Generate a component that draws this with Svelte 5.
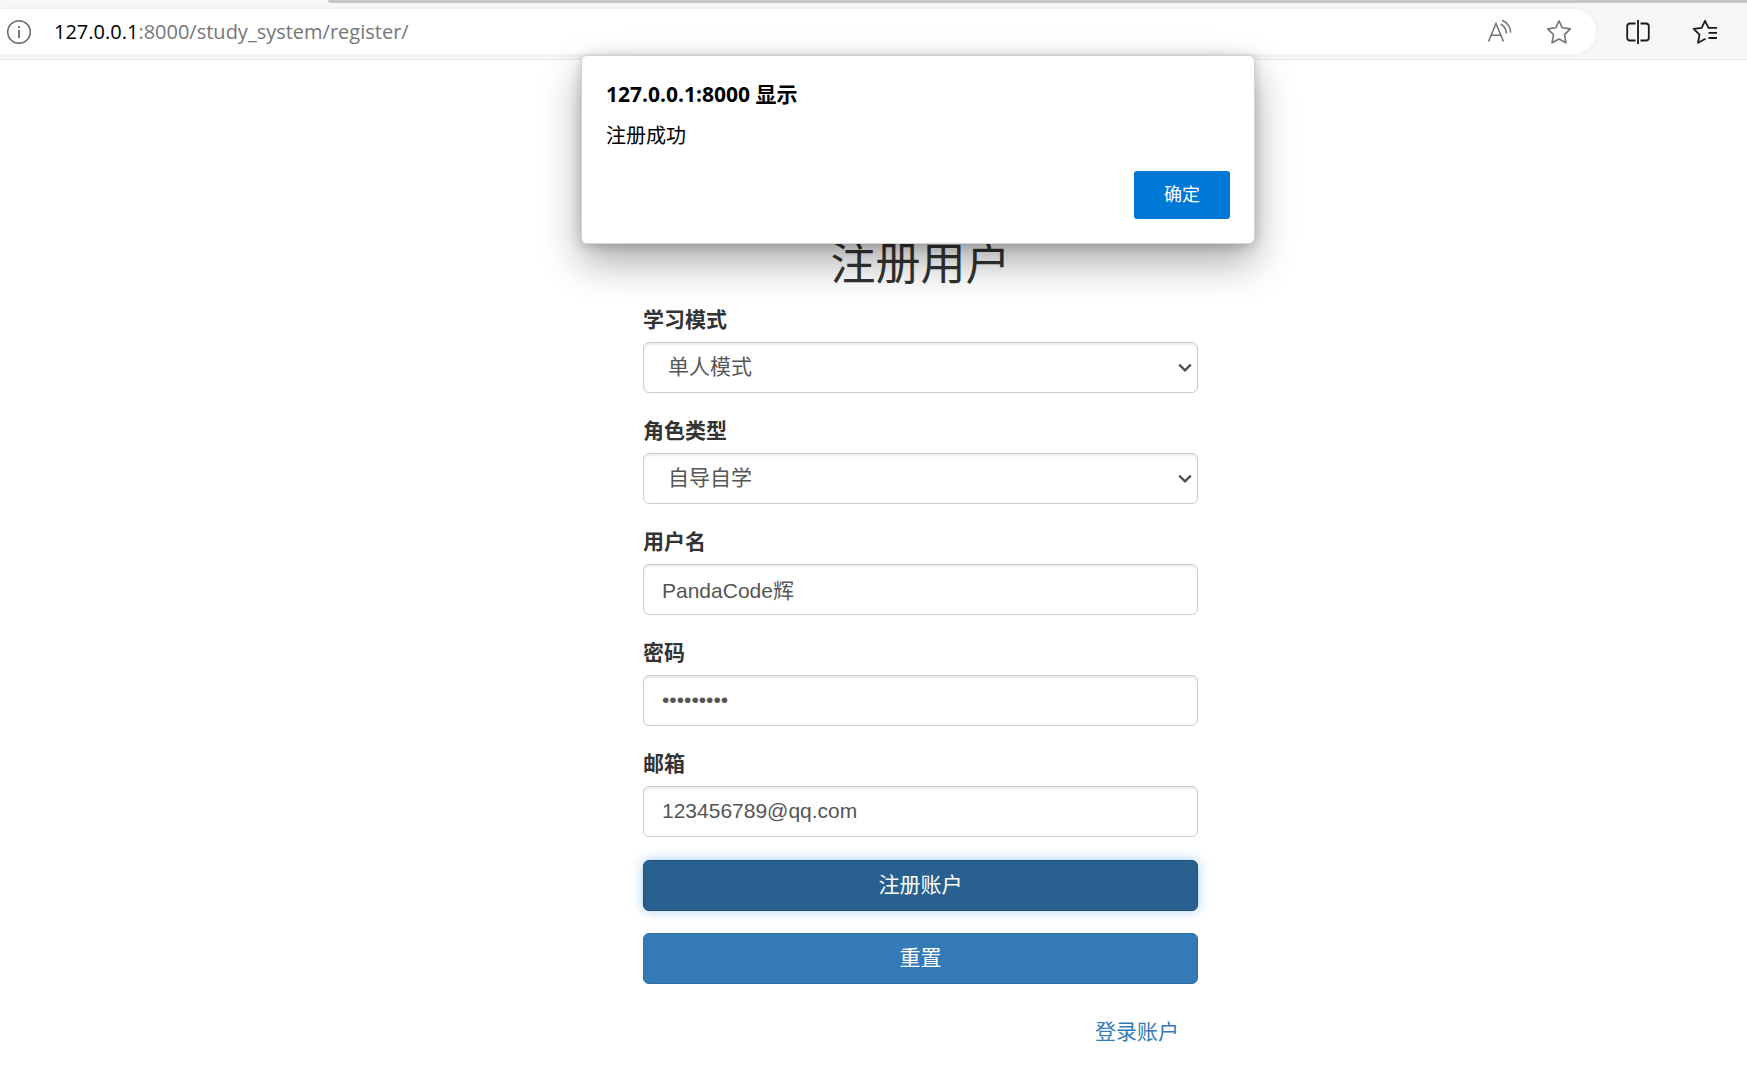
<script>
  let mode = $state('单人模式');
  let role = $state('自导自学');
  let username = $state('PandaCode辉');
  let password = $state('abc123456');
  let email = $state('123456789@qq.com');
</script>

{#snippet chevron()}
  <svg class="chevron" width="14" height="10" viewBox="0 0 14 10" aria-hidden="true">
    <path d="M1.2 1.6 7 7.4l5.800-5.800" fill="none" stroke="#4f4f4f" stroke-width="2.2" />
  </svg>
{/snippet}

<div class="window">
  <header>
    <div class="tabstrip"><span></span></div>
    <div class="toolbar">
      <div class="address">
        <svg class="info" width="26" height="26" viewBox="0 0 26 26" fill="none" stroke="#6b6b6b" aria-hidden="true">
          <circle cx="13" cy="13" r="11.300" stroke-width="1.500" />
          <path d="M13 11v8M13 7v2.200" stroke-width="1.800" />
        </svg>
        <p class="url"><span>127.0.0.1</span>:8000/study_system/register/</p>
        <button class="icon" type="button" aria-label="朗读此页内容">
          <svg width="26" height="26" viewBox="0 0 26 26" fill="none" stroke="#767676" stroke-width="1.600" aria-hidden="true">
            <path d="M2.500 22.500 10 4.500 17.500 22.500M5.300 16.300h9.500" />
            <path d="M14.800 5a11.500 11.500 0 0 1 5.700 9.500M16 1.300a14.500 14.500 0 0 1 8.700 12.200" />
          </svg>
        </button>
        <button class="icon" type="button" aria-label="收藏">
          <svg width="26" height="26" viewBox="0 0 26 26" fill="none" stroke="#767676" stroke-width="1.600" stroke-linejoin="round" aria-hidden="true">
            <path d="M13 1.800 16.300 8.800 24.300 9.900 18.500 15.600 20 23.800 13 20 6 23.800 7.500 15.600 1.700 9.900 9.700 8.800Z" />
          </svg>
        </button>
      </div>
      <button class="icon" type="button" aria-label="拆分屏幕">
        <svg width="26" height="26" viewBox="0 0 26 26" fill="none" stroke="#1b1b1b" stroke-width="1.800" aria-hidden="true">
          <path d="M10.500 4.500H5Q2.200 4.500 2.200 7.300V18.700Q2.200 21.500 5 21.500H10.500M15.500 4.500H21Q23.800 4.500 23.800 7.300V18.700Q23.800 21.500 21 21.500H15.500M13 1V25" />
        </svg>
      </button>
      <button class="icon" type="button" aria-label="收藏夹">
        <svg width="26" height="26" viewBox="0 0 26 26" fill="none" stroke="#1b1b1b" stroke-width="1.800" stroke-linejoin="round" aria-hidden="true">
          <path d="M25 8.800H16.500L13 1.800 9.700 8.800 1.700 9.900 7.500 15.600 6 23.800 13.500 19.800M16.500 13.800H25M16.500 19H25" />
        </svg>
      </button>
    </div>
  </header>

  <main>
    <form onsubmit={(e) => e.preventDefault()}>
      <h1>注册用户</h1>
      <div class="field">
        <label for="mode">学习模式</label>
        <div class="select">
          <select id="mode" bind:value={mode}>
            <option>单人模式</option>
            <option>多人模式</option>
          </select>
          {@render chevron()}
        </div>
      </div>
      <div class="field">
        <label for="role">角色类型</label>
        <div class="select">
          <select id="role" bind:value={role}>
            <option>自导自学</option>
          </select>
          {@render chevron()}
        </div>
      </div>
      <div class="field">
        <label for="username">用户名</label>
        <input id="username" type="text" bind:value={username} />
      </div>
      <div class="field">
        <label for="password">密码</label>
        <input id="password" type="password" bind:value={password} />
      </div>
      <div class="field">
        <label for="email">邮箱</label>
        <input id="email" type="email" bind:value={email} />
      </div>
      <button class="submit active" type="submit">注册账户</button>
      <button class="submit" type="reset">重置</button>
      <a href="#login">登录账户</a>
    </form>
  </main>

  <div class="dialog" role="alertdialog" aria-labelledby="dialog-title" aria-describedby="dialog-text">
    <h2 id="dialog-title">127.0.0.1:8000 显示</h2>
    <p id="dialog-text">注册成功</p>
    <button type="button">确定</button>
  </div>
</div>

<style>
  :global(body) {
    margin: 0;
    background: #fff;
  }

  * {
    box-sizing: border-box;
  }

  .window {
    position: relative;
    min-height: 100vh;
    overflow: hidden;
    color: #333;
    font-family: 'Liberation Sans', 'Noto Sans CJK SC', sans-serif;
    font-size: 21px;
    line-height: 30px;
  }

  header {
    background: #f7f7f7;
    border-bottom: 1px solid #e5e5e5;
  }

  .tabstrip {
    display: flex;
    padding-left: 328px;
  }

  .tabstrip span {
    flex: 1;
    height: 3px;
    background: #c6c6c6;
    border-bottom-left-radius: 3px;
  }

  .toolbar {
    display: flex;
    align-items: center;
    padding: 6px 29px 5px 0;
    gap: 41px;
  }

  .address {
    display: flex;
    flex: 1;
    align-items: center;
    gap: 34px;
    height: 45px;
    margin-right: -12px;
    padding: 0 24px 0 6px;
    background: #fff;
    border-radius: 0 23px 23px 0;
    box-shadow: 0 0 6px #0000000d;
  }

  .info {
    flex: none;
  }

  .url {
    flex: 1;
    margin: 0 0 0 -12px;
    color: #767676;
    font-family: 'Open Sans', sans-serif;
    font-size: 20px;
  }

  .url span {
    color: #000;
  }

  .icon {
    display: flex;
    padding: 0;
    background: none;
    border: 0;
  }

  main {
    padding: 175px 0 0 94px;
  }

  form {
    display: flex;
    flex-direction: column;
    max-width: 555px;
    margin: 0 auto;
  }

  h1 {
    margin: 0 0 10px;
    font-size: 45px;
    font-weight: 400;
    line-height: 60px;
    text-align: center;
  }

  .field {
    display: flex;
    flex-direction: column;
    gap: 7px;
    margin-bottom: 23px;
  }

  label {
    font-weight: 700;
  }

  .select {
    display: grid;
    align-items: center;
  }

  .select select,
  .chevron {
    grid-area: 1 / 1;
  }

  .chevron {
    justify-self: end;
    margin-right: 6px;
    pointer-events: none;
  }

  input,
  select {
    appearance: none;
    width: 100%;
    height: 51px;
    padding: 0 18px 1px;
    color: #555;
    font: inherit;
    background: #fff;
    border: 1px solid #ccc;
    border-radius: 6px;
    box-shadow: inset 0 2px 2px #00000013;
  }

  select {
    padding: 0 24px 1px;
  }

  .submit {
    height: 51px;
    margin-bottom: 22px;
    padding: 0 0 2px;
    color: #fff;
    font: inherit;
    background: #337ab7;
    border: 1px solid #2e6da4;
    border-radius: 6px;
  }

  .active {
    background: #286090;
    border-color: #204d74;
    box-shadow: 0 0 12px #66afe999;
  }

  a {
    align-self: flex-end;
    margin: 11px 19px 0 0;
    color: #337ab7;
    text-decoration: none;
  }

  .dialog {
    position: absolute;
    top: 55px;
    right: 0;
    left: 89px;
    display: flex;
    flex-direction: column;
    width: 674px;
    margin: 0 auto;
    padding: 23px 24px 24px;
    color: #000;
    font-family: 'Open Sans', 'Noto Sans CJK SC', sans-serif;
    background: #fff;
    border: 1px solid #d4d4d4;
    border-radius: 6px;
    box-shadow: 0 18px 40px #00000055, 0 2px 12px #00000033;
  }

  .dialog h2 {
    margin: 0 0 12px;
    font-size: 21px;
    line-height: 30px;
  }

  .dialog p {
    margin: 0 0 20px;
    font-size: 20px;
    line-height: 30px;
  }

  .dialog button {
    align-self: flex-end;
    width: 96px;
    height: 48px;
    padding: 0 0 2px;
    color: #fff;
    font: inherit;
    font-size: 18px;
    background: #0078d7;
    border: 0;
    border-radius: 3px;
  }
</style>
